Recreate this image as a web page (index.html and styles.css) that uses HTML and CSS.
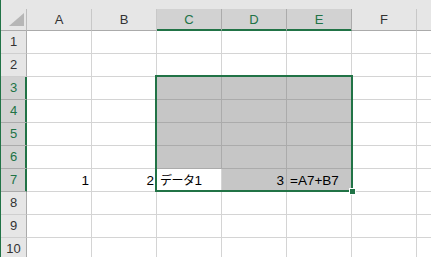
FILE: index.html
```html
<!DOCTYPE html>
<html>
<head>
    <meta charset="UTF-8">
    <title>Sheet1</title>
    <link rel="stylesheet" href="styles.css">
</head>
<body>
    <div class="sheet">
        <div class="strip"></div>
        <div class="grid">
            <div class="corner">
                <svg width="25" height="21" viewBox="0 0 25 21"><polygon points="23,4 23,17 8,17" fill="#b6b6b6"/></svg>
            </div>
            <div class="col-head">A</div>
            <div class="col-head">B</div>
            <div class="col-head on">C</div>
            <div class="col-head on">D</div>
            <div class="col-head on">E</div>
            <div class="col-head">F</div>
            <div class="col-head"></div>

            <div class="row-head">1</div>
            <div class="cell"></div><div class="cell"></div><div class="cell"></div><div class="cell"></div><div class="cell"></div><div class="cell"></div><div class="cell"></div>

            <div class="row-head">2</div>
            <div class="cell"></div><div class="cell"></div><div class="cell"></div><div class="cell"></div><div class="cell"></div><div class="cell"></div><div class="cell"></div>

            <div class="row-head on">3</div>
            <div class="cell"></div><div class="cell"></div><div class="cell sel"></div><div class="cell sel"></div><div class="cell sel"></div><div class="cell"></div><div class="cell"></div>

            <div class="row-head on">4</div>
            <div class="cell"></div><div class="cell"></div><div class="cell sel"></div><div class="cell sel"></div><div class="cell sel"></div><div class="cell"></div><div class="cell"></div>

            <div class="row-head on">5</div>
            <div class="cell"></div><div class="cell"></div><div class="cell sel"></div><div class="cell sel"></div><div class="cell sel"></div><div class="cell"></div><div class="cell"></div>

            <div class="row-head on">6</div>
            <div class="cell"></div><div class="cell"></div><div class="cell sel"></div><div class="cell sel"></div><div class="cell sel"></div><div class="cell"></div><div class="cell"></div>

            <div class="row-head on">7</div>
            <div class="cell num">1</div>
            <div class="cell num">2</div>
            <div class="cell"><span class="jp">データ</span>1</div>
            <div class="cell sel num">3</div>
            <div class="cell sel">=A7+B7</div>
            <div class="cell"></div><div class="cell"></div>

            <div class="row-head">8</div>
            <div class="cell"></div><div class="cell"></div><div class="cell"></div><div class="cell"></div><div class="cell"></div><div class="cell"></div><div class="cell"></div>

            <div class="row-head">9</div>
            <div class="cell"></div><div class="cell"></div><div class="cell"></div><div class="cell"></div><div class="cell"></div><div class="cell"></div><div class="cell"></div>

            <div class="row-head">10</div>
            <div class="cell"></div><div class="cell"></div><div class="cell"></div><div class="cell"></div><div class="cell"></div><div class="cell"></div><div class="cell"></div>
        </div>

        <div class="selection"><span class="handle"></span></div>
    </div>
</body>
</html>
```

FILE: styles.css
```css
body {
    margin: 0;
    background-color: #e6e6e6;
    font-family: "Liberation Sans", "Noto Sans CJK JP", sans-serif;
}

.sheet {
    position: relative;
    width: 430px;
    height: 257px;
    overflow: hidden;
    border-left: 1px solid #217346;
}

.strip {
    height: 9px;
}

.grid {
    display: grid;
    grid-template-columns: 26px repeat(7, 65px);
    grid-template-rows: 22px;
    grid-auto-rows: 23px;
}

.grid > div {
    box-sizing: border-box;
}

.corner {
    border-right: 1px solid #bcbcbc;
    border-bottom: 1px solid #ababab;
}

.corner svg {
    display: block;
}

.col-head {
    border-right: 1px solid #c8c8c8;
    border-bottom: 1px solid #ababab;
    font-size: 13px;
    line-height: 21px;
    text-align: center;
    color: #333;
}

.col-head.on {
    background-color: #d2d2d2;
    color: #217346;
    border-right-color: #ababab;
    border-bottom-color: #217346;
    box-shadow: inset 0 -1px 0 #217346;
}

.row-head {
    border-right: 1px solid #ababab;
    border-bottom: 1px solid #cfcfcf;
    font-size: 13px;
    line-height: 22px;
    text-align: center;
    color: #333;
}

.row-head.on {
    background-color: #d2d2d2;
    color: #217346;
    border-right-color: #217346;
    border-bottom-color: #ababab;
    box-shadow: inset -1px 0 0 #217346;
}

.cell {
    background-color: #fff;
    border-right: 1px solid #d4d4d4;
    border-bottom: 1px solid #d4d4d4;
    font-size: 13.5px;
    line-height: 21px;
    padding: 1px 3px 0 3px;
    color: #000;
    white-space: nowrap;
}

.cell .jp {
    font-size: 12px;
    letter-spacing: -0.5px;
}

.cell.sel {
    background-color: #c6c6c6;
    border-color: #ababab;
}

.cell.num {
    text-align: right;
    padding-right: 2px;
}

.selection {
    position: absolute;
    left: 154px;
    top: 75px;
    width: 194px;
    height: 113px;
    border: 2px solid #217346;
}

.handle {
    position: absolute;
    right: -5px;
    bottom: -5px;
    width: 5px;
    height: 5px;
    background-color: #217346;
    border: 1px solid #fff;
}
```
